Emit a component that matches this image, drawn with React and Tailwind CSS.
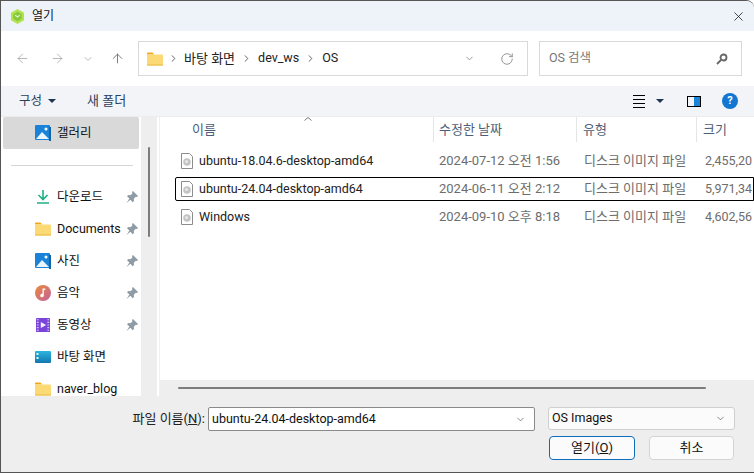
import React from "react";
import { ArrowLeft, ArrowRight, ArrowUp, ChevronDown, ChevronRight, RotateCw, X } from "lucide-react";

const FONT = "font-['Roboto','Noto_Sans_CJK_KR',sans-serif]";

function FolderIcon({ className = "w-4 h-[14px]" }) {
  return (
    <svg viewBox="0 0 16 14" className={className}>
      <path d="M0 1.500Q0 .5 1 .5h4.500l1.500 2H0z" fill="#f0a818" />
      <rect x="0" y="2.500" width="16" height="11" rx="1" fill="#fbd974" />
      <rect x="0" y="12.500" width="16" height="1" fill="#eab942" />
    </svg>
  );
}

function PictureIcon() {
  return (
    <svg viewBox="0 0 16 16" className="w-4 h-4">
      <rect x="0" y="0" width="15" height="15" rx="1" fill="#1a83d8" />
      <rect x="14" y="2" width="2" height="14" fill="#1266a8" />
      <path d="M1 14l6-7 7 7z" fill="#eaf5fd" />
      <circle cx="11" cy="4" r="1.500" fill="#fff" />
    </svg>
  );
}

function PinIcon() {
  return (
    <svg viewBox="0 0 12 12" className="w-3 h-3">
      <path d="M7 0l5 5-1 1-1.200-.3-2 2 .2 2.300-1.200 1.200-2.400-2.400L.5 12l2.900-4.400L1 5.200l1.200-1.200 2.300.2 2-2L6 1z" fill="#8f9ba5" />
    </svg>
  );
}

function DownloadIcon() {
  return (
    <svg viewBox="0 0 14 14" className="w-[14px] h-[14px]" fill="none" stroke="#1fae82" strokeWidth="1.600">
      <path d="M7 0v9M2.500 5l4.500 4.500L11.500 5M1 13h12" />
    </svg>
  );
}

function MusicIcon() {
  return (
    <svg viewBox="0 0 16 16" className="w-4 h-4">
      <defs>
        <linearGradient id="mus" x1="0" y1="0" x2="1" y2="1">
          <stop offset="0" stopColor="#ee8a3a" />
          <stop offset="1" stopColor="#c25f9e" />
        </linearGradient>
      </defs>
      <circle cx="8" cy="8" r="8" fill="url(#mus)" />
      <path d="M7.500 3.500h2.800v1.500H8.800v5.500a1.800 1.800 0 1 1-1.300-1.700z" fill="#fff" />
    </svg>
  );
}

function VideoIcon() {
  return (
    <svg viewBox="0 0 16 16" className="w-[14px] h-4">
      <rect width="16" height="16" rx="1" fill="#7b44d8" />
      <path d="M1 2h2M1 5h2M1 8h2M1 11h2M1 14h2M13 2h2M13 5h2M13 8h2M13 11h2M13 14h2" stroke="#d8c4f8" strokeWidth="1.300" />
      <path d="M5.500 4.500L11.500 8l-6 3.500z" fill="#f4eefe" />
    </svg>
  );
}

function DesktopIcon() {
  return (
    <svg viewBox="0 0 16 12" className="w-4 h-3">
      <defs>
        <linearGradient id="dsk" x1="0" y1="0" x2="0" y2="1">
          <stop offset="0" stopColor="#2cb6de" />
          <stop offset="1" stopColor="#1276b0" />
        </linearGradient>
      </defs>
      <rect width="16" height="12" rx="1" fill="url(#dsk)" />
      <rect x="1.500" y="2" width="2" height="2" fill="#e6f7fd" />
      <rect x="1.500" y="6" width="2" height="2" fill="#e6f7fd" />
    </svg>
  );
}

function DiscFileIcon() {
  return (
    <svg viewBox="0 0 12 16" className="w-3 h-4">
      <path d="M.5.500h8l3 3v12H.5z" fill="#fff" stroke="#8d8d8d" />
      <circle cx="6" cy="9" r="3.800" fill="#c4c4c4" />
      <circle cx="5.500" cy="8.500" r="1.500" fill="#e8e8e8" />
    </svg>
  );
}

function AppIcon() {
  return (
    <svg viewBox="0 0 16 16" className="w-[15px] h-[17px]">
      <path d="M8 0l7 4v8l-7 4-7-4V4z" fill="#b4e24e" />
      <path d="M8 3l4.500 2.500v5L8 13l-4.500-2.500v-5z" fill="#86c93a" />
      <path d="M5.500 6.500L8 8.500l2.500-2" fill="none" stroke="#eaf6d4" strokeWidth="1.200" />
    </svg>
  );
}

function NavItem({ icon, label, pinned }) {
  return (
    <div className="h-8 flex items-center pl-[33px] text-[12.500px] text-[#111]">
      <span className="w-[17px] flex justify-center shrink-0">{icon}</span>
      <span className="ml-[6px] flex-1 whitespace-nowrap">{label}</span>
      {pinned && <span className="mr-[3px] flex"><PinIcon /></span>}
    </div>
  );
}

const type = "디스크 이미지 파일";

function FileRow({ name, date, size, focused }) {
  return (
    <div className={`h-6 flex items-center text-[12.500px] whitespace-nowrap border ${focused ? "border-black rounded-l-[2px]" : "border-transparent"}`}>
      <span className="ml-[5px] w-3 flex shrink-0"><DiscFileIcon /></span>
      <span className="ml-[6px] w-[240px] text-[#222]">{name}</span>
      <span className="w-[145px] text-[#6d6d6d] text-[13px]">{date}</span>
      <span className="w-[121px] text-[#6d6d6d] text-[13px]">{type}</span>
      <span className="text-[#6d6d6d]">{size}</span>
    </div>
  );
}

export default function App() {
  return (
    <div className={`${FONT} w-[754px] h-[473px] overflow-hidden flex flex-col bg-white border-t border-l border-b border-[#555] rounded-tr-lg`}>
      <div className="h-[30px] bg-[#eef3f9] flex items-center pl-[9px] shrink-0">
        <AppIcon />
        <span className="ml-[7px] text-[12px] text-[#111]">열기</span>
        <X className="ml-auto mr-[8px] w-[15px] h-[15px] text-[#111]" strokeWidth={1.200} />
      </div>

      <div className="h-[55px] flex items-center shrink-0">
        <div className="w-[137px] flex items-center pl-[14px] text-[#a0a0a0]">
          <ArrowLeft className="w-[15px] h-[15px]" strokeWidth={1.200} />
          <ArrowRight className="ml-5 w-[15px] h-[15px]" strokeWidth={1.200} />
          <ChevronDown className="ml-[17px] w-[12px] h-[12px]" strokeWidth={1.500} />
          <ArrowUp className="ml-[16px] w-[15px] h-[15px] text-[#555]" strokeWidth={1.200} />
        </div>
        <div className="w-[390px] h-[35px] border border-[#d9d9d9] flex items-center pl-2 text-[13px] text-[#222]">
          <FolderIcon />
          <ChevronRight className="ml-[5px] w-[11px] h-[11px] text-[#555]" strokeWidth={2} />
          <span className="ml-[5px]">바탕 화면</span>
          <ChevronRight className="ml-[6px] w-[11px] h-[11px] text-[#555]" strokeWidth={2} />
          <span className="ml-[6px] text-[12.500px]">dev_ws</span>
          <ChevronRight className="ml-[6px] w-[11px] h-[11px] text-[#555]" strokeWidth={2} />
          <span className="ml-[6px] text-[12.500px]">OS</span>
          <ChevronDown className="ml-auto mr-[25px] w-[11px] h-[11px] text-[#666]" strokeWidth={1.400} />
          <RotateCw className="mr-[13px] w-[14px] h-[14px] text-[#888]" strokeWidth={1.500} />
        </div>
        <div className="ml-[11px] w-[203px] h-[35px] border border-[#d9d9d9] flex items-center pl-[9px] pr-[13px] text-[12.500px] text-[#777]">
          <span>OS 검색</span>
          <svg viewBox="0 0 12 12" className="ml-auto w-3 h-3" fill="none" stroke="#666" strokeWidth="1.800">
            <circle cx="7.500" cy="4.500" r="3" />
            <path d="M5 7l-4 4" />
          </svg>
        </div>
      </div>

      <div className="h-[30px] bg-[#f3f4f7] flex items-center pl-[18px] text-[12.500px] text-[#2b3f5c] shrink-0">
        <span>구성</span>
        <span className="ml-[6px] w-0 h-0 border-x-4 border-t-[4px] border-x-transparent border-t-[#1f3554]" />
        <span className="ml-[31px] text-[13px]">새 폴더</span>
        <span className="ml-auto flex flex-col gap-[3px] w-3">
          <span className="h-px bg-black" />
          <span className="h-px bg-black" />
          <span className="h-px bg-black" />
          <span className="h-px bg-black" />
        </span>
        <span className="ml-[11px] w-0 h-0 border-x-4 border-t-[4px] border-x-transparent border-t-[#1f3554]" />
        <span className="ml-[23px] w-[14px] h-[11px] border border-black flex justify-end"><span className="w-[6px] bg-[#1b86d8]" /></span>
        <span className="ml-[21px] mr-[16px] w-4 h-4 rounded-full bg-[#1277d2] text-white text-[11px] font-bold flex items-center justify-center">?</span>
      </div>

      <div className="flex-1 flex min-h-0 border-t border-[#ececec]">
        <div className="w-[140px] shrink-0 overflow-hidden">
          <div className="mx-[2px] h-8 bg-[#d9d9d9] rounded-[2px] flex items-center pl-[31px] text-[12.500px] text-[#111]">
            <span className="w-[17px] flex justify-center"><PictureIcon /></span>
            <span className="ml-[6px]">갤러리</span>
          </div>
          <div className="mx-[10px] mt-4 mb-[15px] h-px bg-[#d4d4d4] w-[122px]" />
          <NavItem icon={<DownloadIcon />} label="다운로드" pinned />
          <NavItem icon={<FolderIcon />} label="Documents" pinned />
          <NavItem icon={<PictureIcon />} label="사진" pinned />
          <NavItem icon={<MusicIcon />} label="음악" pinned />
          <NavItem icon={<VideoIcon />} label="동영상" pinned />
          <NavItem icon={<DesktopIcon />} label="바탕 화면" />
          <NavItem icon={<FolderIcon />} label="naver_blog" />
        </div>

        <div className="w-4 shrink-0 bg-[#eeeeee] flex justify-center pt-[30px]">
          <div className="w-[2px] h-[90px] bg-[#7d7d7d] rounded-full" />
        </div>

        <div className="ml-[2px] border-l border-[#f0f0f0] flex-1 flex flex-col min-w-0 overflow-hidden">
          <div className="relative h-[25px] flex text-[13px] text-[#4d5f78] whitespace-nowrap shrink-0">
            <span className="w-[274px] pl-[32px] pt-[3px] border-r border-[#e5e5e5]">이름</span>
            <span className="w-[143px] pl-[5px] pt-[3px] border-r border-[#e5e5e5]">수정한 날짜</span>
            <span className="w-[120px] pl-[6px] pt-[3px] border-r border-[#e5e5e5]">유형</span>
            <span className="pl-[6px] pt-[3px]">크기</span>
            <svg viewBox="0 0 8 4" className="absolute left-[144px] top-0 w-2 h-1" fill="none" stroke="#777">
              <path d="M.5 3.500L4 .5l3.500 3" />
            </svg>
          </div>
          <div className="flex-1 pt-[7px] pl-[15px] flex flex-col gap-1 min-h-0 overflow-hidden">
            <FileRow name="ubuntu-18.04.6-desktop-amd64" date="2024-07-12 오전 1:56" size="2,455,20" />
            <FileRow name="ubuntu-24.04-desktop-amd64" date="2024-06-11 오전 2:12" size="5,971,34" focused />
            <FileRow name="Windows" date="2024-09-10 오후 8:18" size="4,602,56" />
          </div>
          <div className="h-4 bg-[#eeeeee] flex items-center pl-[18px] shrink-0">
            <div className="w-[528px] h-[2px] bg-[#7d7d7d] rounded-full" />
          </div>
        </div>
      </div>

      <div className="h-[76px] bg-[#eeeeee] flex shrink-0 relative">
        <div className="w-[207px] pt-[13px] text-right pr-[3px] text-[13px] text-[#222]">
          파일 이름(<span className="underline">N</span>):
        </div>
        <div className="flex flex-col">
          <div className="w-[327px] h-6 mt-[11px] bg-white border border-[#8a8a8a] rounded-[2px] flex items-center pl-[3px] pr-[8px] text-[12.500px] text-[#111]">
            <span>ubuntu-24.04-desktop-amd64</span>
            <ChevronDown className="ml-auto w-[11px] h-[11px] text-[#555]" strokeWidth={1.500} />
          </div>
        </div>
        <div className="ml-[13px] w-[187px] flex flex-col items-end">
          <div className="w-full h-[23px] mt-[11px] bg-[#fbfbfb] border border-[#cfcfcf] rounded-[3px] flex items-center pl-[3px] pr-[8px] text-[12.500px] text-[#111]">
            <span>OS Images</span>
            <ChevronDown className="ml-auto w-[11px] h-[11px] text-[#555]" strokeWidth={1.500} />
          </div>
          <div className="mt-[6px] w-full flex justify-between pl-[1px] pr-[1px] text-[13px] text-[#111]">
            <div className="w-[86px] h-6 bg-[#fbfbfb] border border-[#0f6cbd] rounded-[4px] flex items-center justify-center">열기(<span className="underline">O</span>)</div>
            <div className="w-[85px] h-6 bg-[#fbfbfb] border border-[#d4d4d4] rounded-[4px] flex items-center justify-center">취소</div>
          </div>
        </div>
      </div>
    </div>
  );
}
